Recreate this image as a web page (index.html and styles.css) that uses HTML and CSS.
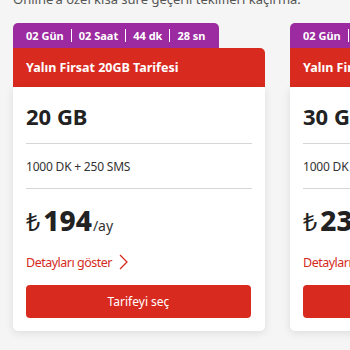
FILE: index.html
```html
<!DOCTYPE html>
<html lang="tr">
<head>
<meta charset="utf-8">
<link rel="stylesheet" href="styles.css">
</head>
<body>
<div class="page">
  <p class="intro">Online'a özel kısa süre geçerli teklifleri kaçırma.</p>
  <div class="cards">
    <div class="card">
      <div class="tab"><span>02 Gün</span><i></i><span>02 Saat</span><i></i><span>44 dk</span><i></i><span>28 sn</span></div>
      <div class="head">Yalın Firsat 20GB Tarifesi</div>
      <div class="body">
        <div class="gb">20 GB</div>
        <div class="mins">1000 DK + 250 SMS</div>
        <div class="price"><span class="cur">₺</span><span class="amt">194</span><span class="per">/ay</span></div>
        <div class="more">Detayları göster <svg width="9" height="16" viewBox="0 0 9 16"><path d="M1 1l7 7-7 7" fill="none" stroke="#d52b1e" stroke-width="1.3"/></svg></div>
        <button class="btn">Tarifeyi seç</button>
      </div>
    </div>
    <div class="card">
      <div class="tab"><span>02 Gün</span><i></i><span>02 Saat</span><i></i><span>44 dk</span><i></i><span>28 sn</span></div>
      <div class="head">Yalın Firsat 30GB Tarifesi</div>
      <div class="body">
        <div class="gb">30 GB</div>
        <div class="mins">1000 DK + 250 SMS</div>
        <div class="price"><span class="cur">₺</span><span class="amt">234</span><span class="per">/ay</span></div>
        <div class="more">Detayları göster <svg width="9" height="16" viewBox="0 0 9 16"><path d="M1 1l7 7-7 7" fill="none" stroke="#d52b1e" stroke-width="1.3"/></svg></div>
        <button class="btn">Tarifeyi seç</button>
      </div>
    </div>
  </div>
</div>
</body>
</html>
```
FILE: styles.css
```css
* { box-sizing: border-box; }
html, body { margin: 0; padding: 0; }
body {
  background: #f5f5f5;
  font-family: "Noto Sans", "DejaVu Sans", sans-serif;
  color: #222;
  width: 350px;
  height: 350px;
  overflow: hidden;
}
.page { padding: 0 0 0 13px; }
.intro {
  margin: -10px 0 15px;
  height: 18px;
  line-height: 18px;
  font-size: 13px;
  color: #555;
  white-space: nowrap;
}
.cards {
  display: flex;
  gap: 25px;
}
.card {
  flex: 0 0 252px;
  width: 252px;
}
.tab {
  width: 206px;
  height: 25px;
  background: #9c2aa0;
  border-radius: 5px 5px 0 0;
  padding-left: 13px;
  display: flex;
  align-items: center;
  color: #fff;
  font-weight: 700;
  font-size: 11px;
  white-space: nowrap;
}
.tab i {
  display: block;
  width: 1px;
  height: 13px;
  background: #fff;
  margin: 0 7px;
}
.head {
  height: 39px;
  background: #d92a1f;
  border-radius: 0 5px 0 0;
  padding: 0 13px;
  display: flex;
  align-items: center;
  color: #fff;
  font-weight: 700;
  font-size: 12.5px;
  white-space: nowrap;
}
.body {
  background: #fff;
  border-radius: 0 0 5px 5px;
  padding: 0 13px 13px;
  box-shadow: 0 2px 8px rgba(0,0,0,0.10);
}
.gb {
  height: 57px;
  display: flex;
  align-items: center;
  font-size: 22px;
  font-weight: 700;
  color: #222;
  border-bottom: 1px solid #d6d6d6;
  padding-top: 1px;
}
.mins {
  height: 45px;
  display: flex;
  align-items: center;
  font-size: 12px;
  letter-spacing: -0.2px;
  color: #333;
  border-bottom: 1px solid #d6d6d6;
}
.price {
  height: 51px;
  display: flex;
  align-items: baseline;
  padding-top: 14px;
  white-space: nowrap;
}
.cur { font-size: 25px; color: #222; margin-right: 3px; }
.amt { font-size: 28px; font-weight: 800; color: #222; line-height: 34px; }
.per { font-size: 14px; color: #333; margin-left: 1px; }
.more {
  height: 44px;
  display: flex;
  align-items: center;
  gap: 7px;
  font-size: 12.5px;
  letter-spacing: -0.5px;
  color: #d52b1e;
  white-space: nowrap;
}
.btn {
  display: block;
  width: 225px;
  height: 33px;
  border: 0;
  border-radius: 4px;
  background: #d92a1f;
  color: #fff;
  font-family: inherit;
  font-size: 12px;
  margin-top: 1px;
}
```
